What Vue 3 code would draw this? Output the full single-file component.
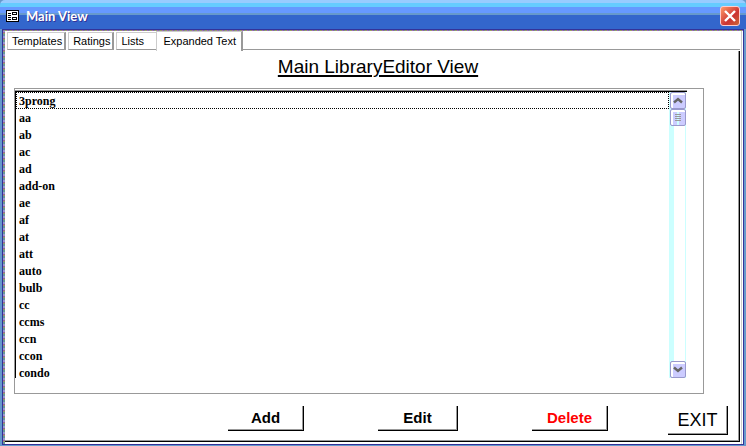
<script setup>
import { ref } from 'vue'

const tabs = ['Templates', 'Ratings', 'Lists', 'Expanded Text']
const activeTab = ref('Expanded Text')

const entries = [
  '3prong', 'aa', 'ab', 'ac', 'ad', 'add-on', 'ae', 'af', 'at',
  'att', 'auto', 'bulb', 'cc', 'ccms', 'ccn', 'ccon', 'condo',
]
const current = ref('3prong')
</script>

<template>
  <div class="window">
    <header class="titlebar">
      <svg class="form-icon" width="13" height="12" viewBox="0 0 13 12" shape-rendering="crispEdges" aria-hidden="true">
        <rect width="13" height="12" fill="#000" />
        <rect x="1" y="1" width="11" height="10" fill="#fff" />
        <path d="M2 3.500h3M2 5.500h3M2 7.500h3M2 9.500h3" stroke="#000" />
        <path d="M6 2h5v3h-5zM6 7h5v3h-5z" fill="#000" />
        <path d="M7 3h3v1h-3zM7 8h3v1h-3z" fill="#fff" />
      </svg>
      <span class="caption">Main View</span>
      <button class="close" type="button" aria-label="Close">
        <svg width="12" height="12" viewBox="0 0 12 12" aria-hidden="true">
          <path d="M1 1L11 11M11 1L1 11" stroke="#fff" stroke-width="2.400" />
        </svg>
      </button>
    </header>

    <div class="frame">
      <nav class="tabs" role="tablist">
        <button
          v-for="tab in tabs"
          :key="tab"
          type="button"
          role="tab"
          class="tab"
          :class="{ active: tab === activeTab }"
          :aria-selected="tab === activeTab"
          @click="activeTab = tab"
        >{{ tab }}</button>
        <span class="tab-rule"></span>
      </nav>

      <main class="pane">
        <h1>Main LibraryEditor View</h1>

        <section class="subform">
          <div class="listbox">
            <ul role="listbox" aria-label="Library entries">
              <li
                v-for="entry in entries"
                :key="entry"
                role="option"
                :aria-selected="entry === current"
                :class="{ current: entry === current }"
                @click="current = entry"
              >{{ entry }}</li>
            </ul>
            <div class="scrollbar">
              <button type="button" class="arrow up" aria-label="Scroll up">
                <svg width="10" height="7" viewBox="0 0 10 7" aria-hidden="true">
                  <path d="M1 5.500L5 2L9 5.500" fill="none" stroke="#666" stroke-width="2.400" />
                </svg>
              </button>
              <div class="thumb">
                <svg width="6" height="7" viewBox="0 0 6 7" shape-rendering="crispEdges" aria-hidden="true">
                  <path d="M0 .5h6M0 2.500h6M0 4.500h6M0 6.500h6" stroke="#999" />
                </svg>
              </div>
              <div class="track"></div>
              <button type="button" class="arrow down" aria-label="Scroll down">
                <svg width="10" height="7" viewBox="0 0 10 7" aria-hidden="true">
                  <path d="M1 1.500L5 5L9 1.500" fill="none" stroke="#666" stroke-width="2.400" />
                </svg>
              </button>
            </div>
          </div>
        </section>

        <footer class="actions">
          <div class="edit-actions">
            <button type="button" class="command">Add</button>
            <button type="button" class="command wide">Edit</button>
            <button type="button" class="command danger">Delete</button>
          </div>
          <button type="button" class="command exit">EXIT</button>
        </footer>
      </main>
    </div>
  </div>
</template>

<style>
body {
  margin: 0;
  background: #fff;
}
</style>

<style scoped>
* {
  box-sizing: border-box;
}

button {
  margin: 0;
  padding: 0;
  border: 0;
  background: #fff;
  color: #000;
  font-family: "Liberation Sans", Arial, sans-serif;
}

.window {
  display: flex;
  flex-direction: column;
  min-height: 100vh;
  font-family: "Liberation Sans", Arial, sans-serif;
  color: #000;
  background: #6699cc;
}

.titlebar {
  display: flex;
  align-items: center;
  gap: 7px;
  height: 29px;
  padding: 2px 6px 0 6px;
  border-radius: 5px 5px 0 0;
  background: linear-gradient(
    #99ccff 0 3px,
    #66ccff 3px 7px,
    #6699ff 7px 13px,
    #6699cc 13px 15px,
    #3366cc 15px
  );
}

.caption {
  flex: 1;
  font-family: Lato, "Open Sans", sans-serif;
  font-size: 13px;
  font-weight: 700;
  line-height: 20px;
  color: #fff;
  text-shadow: 1px 1px 0 #333399;
}

.close {
  display: flex;
  align-items: center;
  justify-content: center;
  width: 20px;
  height: 20px;
  border: 1px solid #ffcccc;
  border-radius: 3px;
  background: linear-gradient(135deg, #ff9966, #cc3333 60%, #cc6633);
}

.frame {
  flex: 1;
  display: flex;
  flex-direction: column;
  margin: 0 2px 1px;
  padding: 0 3px 2px 1px;
  border: 1px solid #333399;
  background:
    repeating-linear-gradient(90deg, #996699 0 1px, #669999 1px 2px, #999966 2px 4px, #9966cc 4px 5px) top / 100% 1px no-repeat,
    repeating-linear-gradient(#9999cc 0 2px, #996699 2px 3px, #999966 3px 4px, #669999 4px 6px) left / 2px 100% no-repeat,
    linear-gradient(#ccc, #ccc) right 1px top / 1px 100% no-repeat,
    #fff;
}

.tabs {
  display: flex;
  align-items: flex-end;
  height: 20px;
  margin-top: 1px;
  margin-left: 1px;
  padding-left: 2px;
  background: #fff;
}

.tab {
  height: 18px;
  margin: 0 2px 1px 0;
  padding: 0 2px 0 4px;
  border: 1px solid #ccc;
  border-right: 2px solid #999;
  border-bottom-color: #999;
  font-size: 11px;
  line-height: 16px;
}

.tab:nth-child(3) {
  width: 40px;
  margin-right: 0;
  border-right: 0;
  text-align: left;
}

.tab.active {
  height: 20px;
  margin: 0;
  padding: 0 5px 2px 6px;
  border-bottom: 0;
}

.tab-rule {
  flex: 1;
  height: 2px;
  border-top: 1px solid #999;
}

.pane {
  flex: 1;
  display: flex;
  flex-direction: column;
  margin-left: 1px;
  padding: 5px 11px 6px 9px;
  border-right: 1px solid #000;
  border-bottom: 1px solid #000;
  background: #fff;
  box-shadow: inset -1px -1px 0 #999;
}

h1 {
  align-self: center;
  margin: 0 0 10px;
  padding: 0 0 0 14px;
  font-size: 19px;
  font-weight: 400;
  line-height: 22px;
  text-decoration: underline;
  text-decoration-thickness: 2px;
  text-underline-offset: 2px;
}

.subform {
  flex: 1;
  display: flex;
  flex-direction: column;
  margin-right: 24px;
  padding: 2px 16px 14px 0;
  border: 1px solid #999;
}

.listbox {
  display: flex;
  border-top: 1px solid #000;
  border-left: 1px solid #000;
  box-shadow: 0 -1px 0 #999;
}

ul {
  flex: 1;
  margin: 0 0 -3px;
  padding: 0;
  list-style: none;
}

li {
  height: 17px;
  padding: 0 2px;
  border: 1px dotted transparent;
  font-family: "Liberation Serif", "Times New Roman", serif;
  font-size: 12px;
  font-weight: 700;
  line-height: 16px;
}

li.current {
  border-color: #000;
}

.scrollbar {
  display: flex;
  flex-direction: column;
  width: 18px;
  padding-left: 1px;
  background: linear-gradient(90deg, #ccffff 0 5px, #fff 5px 16px, #ccffff 16px 17px, #fff 17px);
}

.arrow,
.thumb {
  display: flex;
  align-items: center;
  justify-content: center;
  width: 16px;
  height: 17px;
  border: 1px solid #9999cc;
  border-radius: 2px;
  background: #ccccff;
  box-shadow: inset 1px 1px 0 1px #fff;
}

.thumb {
  background: linear-gradient(90deg, #ccccff 0 6px, #ccffff 6px 8px, #ccccff 8px);
}

.track {
  flex: 1;
}

.actions {
  display: flex;
  justify-content: flex-end;
  align-items: flex-start;
  gap: 60px;
  margin-top: 12px;
}

.edit-actions {
  display: flex;
  gap: 74px;
}

.command {
  width: 76px;
  height: 25px;
  border-right: 1px solid #000;
  border-bottom: 1px solid #000;
  box-shadow: inset -1px -1px 0 #999;
  font-size: 15px;
  font-weight: 700;
  line-height: 22px;
}

.command.wide {
  width: 80px;
}

.command.danger {
  color: #f00;
}

.command.exit {
  width: 60px;
  height: 29px;
  font-size: 18px;
  font-weight: 400;
}
</style>
